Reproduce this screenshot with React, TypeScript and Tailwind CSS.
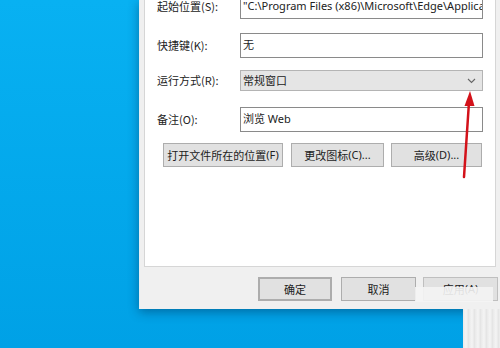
import React from "react";

const cjk = { fontFamily: '"Noto Sans CJK SC", "Noto Sans", sans-serif' };
const mixed = { fontFamily: '"Noto Sans", "Noto Sans CJK SC", sans-serif' };

function Label({ children }: { children: React.ReactNode }) {
  return (
    <div className="w-[83px] shrink-0 text-[11px] leading-none text-[#222] whitespace-nowrap" style={cjk}>
      {children}
    </div>
  );
}

function TextBox({ children, className = "" }: { children: React.ReactNode; className?: string }) {
  return (
    <div
      className={`w-[243px] h-[25px] border border-[#8a8a8a] bg-white pl-[2px] pt-[3px] text-[11px] leading-[15px] text-[#222] whitespace-nowrap overflow-hidden ${className}`}
      style={mixed}
    >
      {children}
    </div>
  );
}

function Btn({ children, className = "" }: { children: React.ReactNode; className?: string }) {
  return (
    <div
      className={`h-[24px] flex items-center justify-center whitespace-nowrap bg-[#e1e1e1] border border-[#adadad] text-[11px] text-[#222] ${className}`}
      style={mixed}
    >
      {children}
    </div>
  );
}

export default function App() {
  return (
    <div className="relative w-[500px] h-[348px] overflow-hidden bg-gradient-to-b from-[#08b1f2] to-[#00a1e6]">
      {/* Dialog */}
      <div className="ml-[139px] w-[372px] h-[309px] bg-[#f0f0f0] border-l border-[#e6eef3] shadow-[0_3px_10px_rgba(0,40,80,0.45)] flex flex-col">
        {/* White panel */}
        <div className="ml-[4px] w-[352px] h-[267px] shrink-0 bg-white border-l border-r border-b border-[#d6d6d6] pl-[12px] overflow-hidden flex flex-col">
          {/* Row 1 */}
          <div className="mt-[-6px] flex items-center h-[25px]">
            <Label>起始位置(S):</Label>
            <TextBox>"C:\Program Files (x86)\Microsoft\Edge\Application\msedge.exe"</TextBox>
          </div>
          {/* Row 2 */}
          <div className="mt-[14px] flex items-center h-[25px]">
            <Label>快捷键(K):</Label>
            <TextBox>
              <span style={cjk}>无</span>
            </TextBox>
          </div>
          {/* Row 3 */}
          <div className="mt-[12px] flex items-center h-[21px]">
            <Label>运行方式(R):</Label>
            <div
              className="w-[243px] h-[21px] border border-[#b4b4b4] bg-[#e5e5e5] pl-[2px] pr-[6px] flex items-center justify-between text-[11px] text-[#222]"
              style={cjk}
            >
              <span>常规窗口</span>
              <svg width="9" height="6" viewBox="0 0 9 6">
                <polyline points="1,1 4.5,4.5 8,1" fill="none" stroke="#666" strokeWidth="1.1" />
              </svg>
            </div>
          </div>
          {/* Row 4 */}
          <div className="mt-[16px] flex items-center h-[25px]">
            <Label>备注(O):</Label>
            <TextBox>
              <span style={cjk}>浏览</span> Web
            </TextBox>
          </div>
          {/* Buttons row */}
          <div className="mt-[11px] ml-[6px] flex">
            <Btn className="w-[120px]">
              <span style={cjk}>打开文件所在的位置</span>(F)
            </Btn>
            <Btn className="ml-[8px] w-[93px]">
              <span style={cjk}>更改图标</span>(C)...
            </Btn>
            <Btn className="ml-[7px] w-[91px]">
              <span style={cjk}>高级</span>(D)...
            </Btn>
          </div>
        </div>
        {/* Bottom buttons */}
        <div className="mt-[10px] ml-[118px] flex">
          <Btn className="w-[74px] border-2 border-[#2f6ca5]">
            <span style={cjk}>确定</span>
          </Btn>
          <Btn className="ml-[9px] w-[75px]">
            <span style={cjk}>取消</span>
          </Btn>
          <Btn className="ml-[7px] w-[75px] bg-[#cccccc] border-[#bfbfbf] text-[#8d8d8d]">
            <span style={cjk}>应用</span>(A)
          </Btn>
        </div>
      </div>

      {/* Watermark overlays */}
      <div className="absolute left-[415px] top-[287px] w-[78px] h-[15px] bg-[#f4f4f4]/90" />
      <div className="absolute left-[463px] top-[309px] w-[37px] h-[39px] bg-[repeating-linear-gradient(90deg,#e9e9e9_0px,#f4f4f4_3px,#e2e2e2_6px)]" />

      {/* Red arrow */}
      <svg className="absolute left-0 top-0" width="500" height="348" viewBox="0 0 500 348">
        <line x1="464" y1="177" x2="469" y2="102" stroke="#d3121a" strokeWidth="2.5" strokeLinecap="round" />
        <polygon points="470,91 464.5,106 474.5,106" fill="#d3121a" />
      </svg>
    </div>
  );
}
